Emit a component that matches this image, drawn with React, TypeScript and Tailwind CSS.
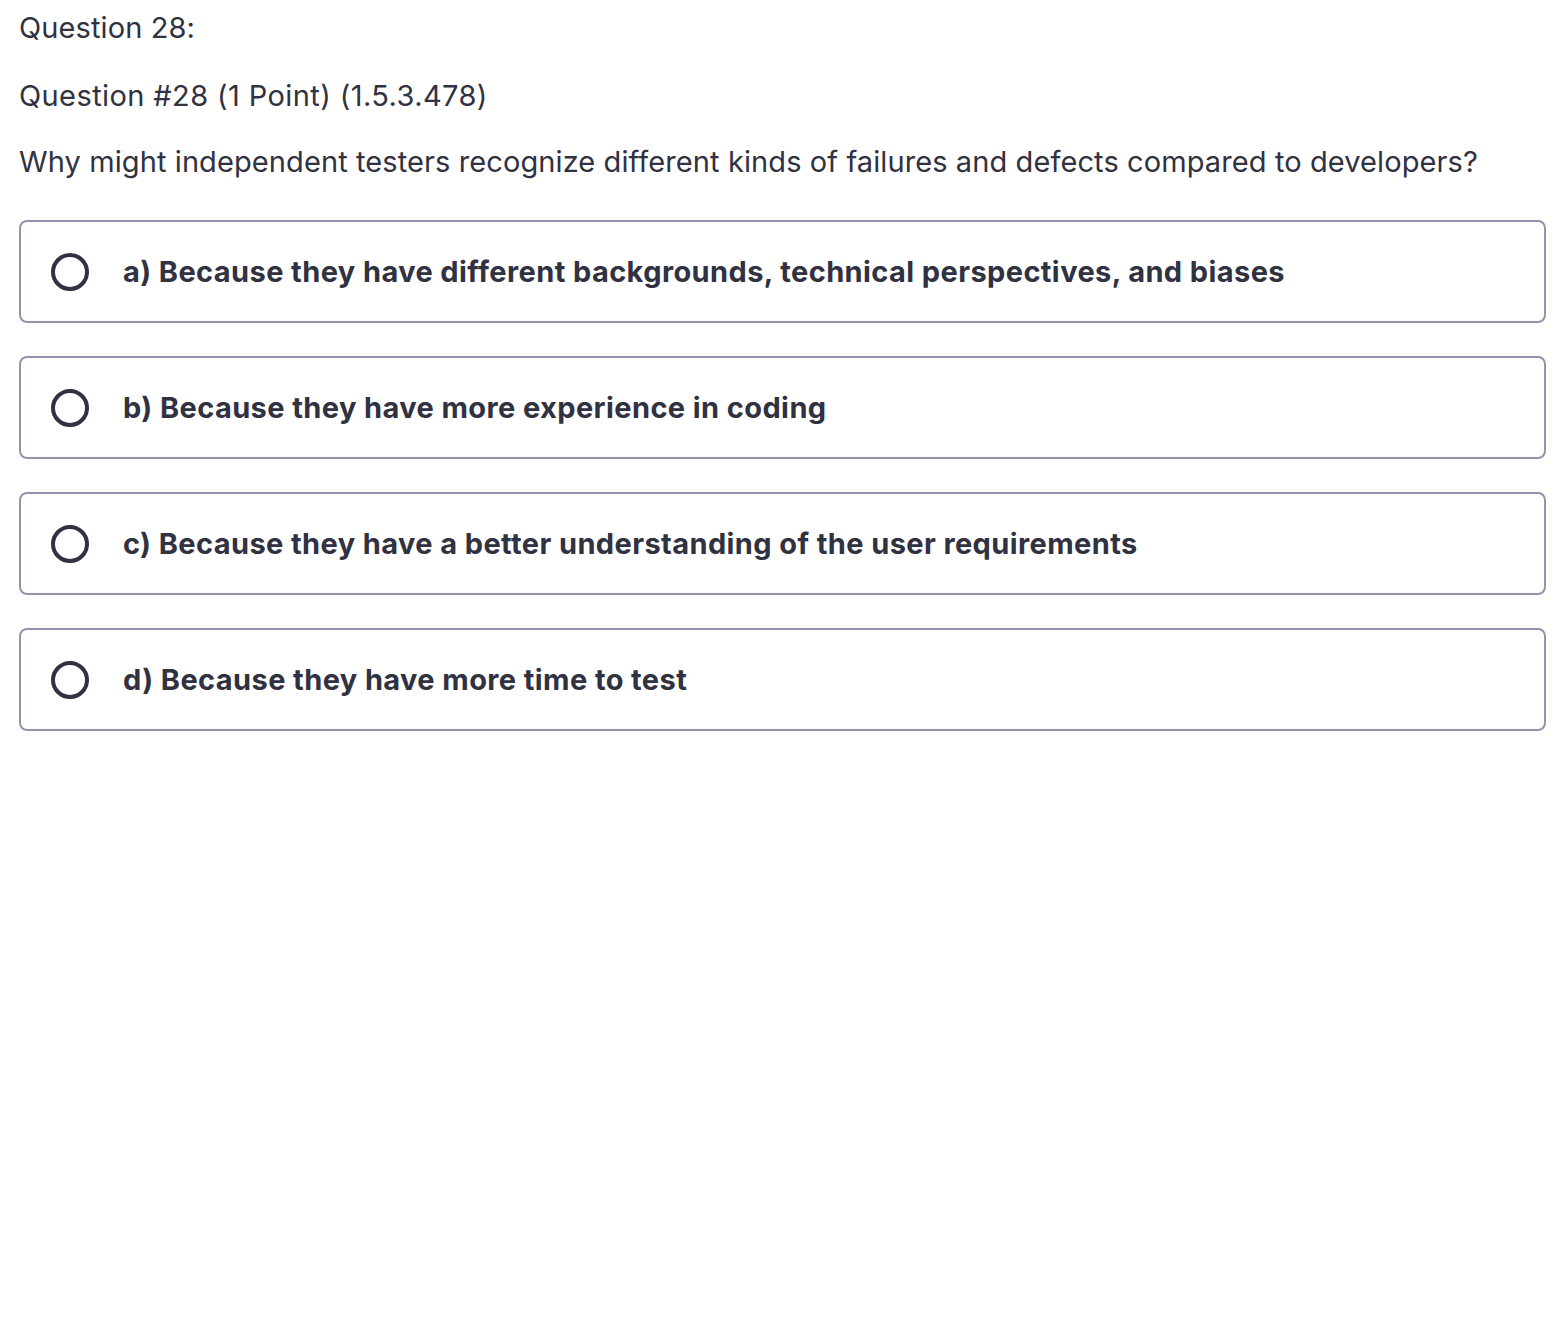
import React from 'react';

const options = [
  'a) Because they have different backgrounds, technical perspectives, and biases',
  'b) Because they have more experience in coding',
  'c) Because they have a better understanding of the user requirements',
  'd) Because they have more time to test',
];

export default function App() {
  return (
    <div className="min-h-screen bg-white pl-[19px] pr-[20px] pt-[8px] text-[#303141] font-['Inter','Liberation_Sans',sans-serif]">
      <p className="text-[29px] leading-[40px] tracking-[0.1px]">Question 28:</p>
      <p className="mt-[28px] text-[29px] leading-[40px] tracking-[0.4px]">Question #28 (1 Point) (1.5.3.478)</p>
      <p className="mt-[26px] text-[29px] leading-[40px] tracking-[0.1px]">
        Why might independent testers recognize different kinds of failures and defects compared to developers?
      </p>

      <div className="mt-[38px] flex flex-col gap-[33px]">
        {options.map((opt) => (
          <label
            key={opt}
            className="flex h-[103px] items-center rounded-[8px] border-2 border-[#9194ac] pl-[30px] pr-6"
          >
            <span className="h-[38px] w-[38px] shrink-0 rounded-full border-[4px] border-[#303141]" />
            <span className="ml-[34px] pt-[1px] text-[29px] font-bold leading-[40px] tracking-[0.4px]">{opt}</span>
          </label>
        ))}
      </div>
    </div>
  );
}
